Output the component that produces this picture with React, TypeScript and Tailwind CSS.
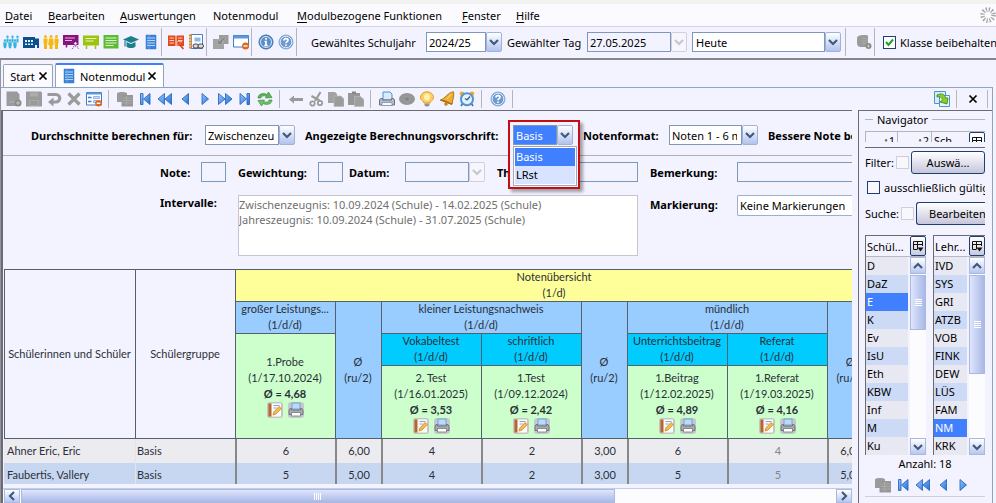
import React from 'react';

type IconProps = { children: React.ReactNode };

const Svg: React.FC<IconProps> = ({ children }) => (
  <svg viewBox="0 0 16 16" className="w-4 h-4 shrink-0" aria-hidden="true">{children}</svg>
);

const GREY = '#9b9b9b';

/* ---------- main toolbar icons ---------- */

const IconClass = () => (
  <Svg>
    <g fill="#35b4dd">
      <circle cx="4.500" cy="2.800" r="1.200" /><circle cx="9.500" cy="2.800" r="1.200" /><circle cx="14.500" cy="2.800" r="1.200" />
      <path d="M3.500 4.500h2v4h-2zM8.500 4.500h2v4h-2zM13.500 4.500h2v4h-2z" />
      <circle cx="2" cy="6.500" r="1.300" /><circle cx="7" cy="6.500" r="1.300" /><circle cx="12" cy="6.500" r="1.300" />
      <path d="M.3 8.300h3.400v3l-.7 3H1l-.7-3zM5.300 8.300h3.400v3l-.7 3H6l-.7-3zM10.300 8.300h3.400v3l-.7 3h-2l-.7-3z" />
    </g>
  </Svg>
);

const IconSchool = () => (
  <Svg>
    <path d="M0 3h12v1.500h4V14h-2v-3h-2v3H0z" fill="#0b4f8c" />
    <path d="M2 6h2v2H2zM5 6h2v2H5zM8 6h2v2H8zM2 9.500h2v1.500H2zM5 9.500h2v1.500H5zM8 9.500h2v1.500H8z" fill="#e8f1fa" />
  </Svg>
);

const IconTeachers = () => (
  <Svg>
    <g fill="#f8b70c">
      <circle cx="2.500" cy="2.500" r="1.500" /><circle cx="8" cy="2.500" r="1.500" /><circle cx="13.500" cy="2.500" r="1.500" />
      <path d="M.5 4.500h4v5H4V15H1V9.500H.5zM6 4.500h4l.8 6.500H9.500v4h-3v-4H5.200zM11.500 4.500h4v5H15V15h-3V9.500h-.5z" />
    </g>
  </Svg>
);

const IconBoardPurple = () => (
  <Svg>
    <path d="M0 1h15.500v10H0z" fill="#86147c" />
    <path d="M2 4h10M2 6.500h7" stroke="#e3b5df" />
    <path d="M3.500 11v2.500" stroke="#86147c" strokeWidth="1.500" />
    <circle cx="12.500" cy="9.500" r="1.800" fill="#f3f3ff" stroke="#86147c" />
    <path d="M9.500 15c0-3.500 6-3.500 6 0" fill="none" stroke="#b468ae" strokeDasharray="1 1" strokeWidth="1.500" />
  </Svg>
);

const IconBoardLime = () => (
  <Svg>
    <path d="M0 1.500h16v10H0z" fill="#9cc40a" />
    <path d="M2.500 4.500h11M2.500 7h8" stroke="#eef7c4" />
    <path d="M3.500 11.500V15M12.500 11.500V15" stroke="#9cc40a" strokeWidth="1.500" />
  </Svg>
);

const IconBoardGreen = () => (
  <Svg>
    <path d="M.5 1h15v13.500H.5z" fill="#5dbb32" />
    <path d="M2.500 4h11M2.500 6.500h11M2.500 9h11M2.500 11.500h8" stroke="#dff5d3" />
  </Svg>
);

const IconHat = () => (
  <Svg>
    <path d="M0 5.500 8 2l8 3.500L8 9z" fill="#1d7f8c" />
    <path d="M3.500 8v4.500c2 2 7 2 9 0V8L8 10z" fill="#1d7f8c" />
    <path d="M2 6.500v6" stroke="#1d7f8c" strokeWidth="1.200" />
  </Svg>
);

const IconNotebook = () => (
  <Svg>
    <path d="M3 1h10v14H3z" fill="#3c84d8" stroke="#2f74c4" strokeWidth=".5" />
    <path d="M4 4h8M4 6.500h8M4 9h8M4 11.500h8" stroke="#b7d6f7" strokeWidth="1.200" />
    <path d="M6 1v14" stroke="#79b0ea" strokeWidth=".7" />
  </Svg>
);

const IconBookRed = () => (
  <Svg>
    <path d="M0 1.500h7.500V12H0zM8.500 1.500H16V12H8.500z" fill="#e2461b" />
    <path d="M1.500 4h4.500M1.500 6.500h4.500M1.500 9h4.500M10 4h4.500M10 6.500h4.500" stroke="#fbd3c5" />
    <path d="M9 7.500v5l5-5z" fill="#e2461b" stroke="#fbd3c5" strokeWidth=".6" />
    <path d="m11 10 4.500 5" stroke="#e2461b" strokeWidth="1.800" />
  </Svg>
);

const IconReport = () => (
  <Svg>
    <path d="M3 .5h11.500v14H3z" fill="#fff" stroke="#4d7fc0" />
    <path d="M1 .5h3v14H1z" fill="#c98a45" />
    <path d="M0 3h3M0 6h3M0 9h3M0 12h3" stroke="#eee" />
    <path d="M6.500 3.500h6v4h-6z" fill="#8db8ec" />
    <rect x="5" y="10" width="5.500" height="4" rx="2" fill="#ddd" stroke="#444" />
    <rect x="10" y="10" width="5.500" height="4" rx="2" fill="#ddd" stroke="#444" />
  </Svg>
);

const IconTransfer = () => (
  <Svg>
    <path d="M6 1h9.500v9H6z" fill={GREY} />
    <path d="M0 5h11v10H0z" fill="#a3a3a3" />
    <path d="m13 4-4.500 4.500 2 2H4.500V5l2 2L11 3z" fill="#868686" stroke="#b8b8b8" strokeWidth=".6" />
  </Svg>
);

const IconWindowMinus = () => (
  <Svg>
    <path d="M.5 1.500h15V13H.5z" fill="#fff" stroke="#3f7cc9" />
    <path d="M.5 1.500h15v3H.5z" fill="#5e98dd" />
    <circle cx="12.500" cy="12" r="3.500" fill="#e2661b" />
    <path d="M10.500 12h4" stroke="#fff" strokeWidth="1.400" />
  </Svg>
);

const IconFormMinus = () => (
  <Svg>
    <path d="M.5 1.500h15V14H.5z" fill="#fff" stroke="#3f7cc9" />
    <path d="M.5 1.500h15v2H.5z" fill="#5e98dd" />
    <path d="M2 6.500h3.500M2 10.500h3.500" stroke="#3f7cc9" strokeWidth="1.500" />
    <path d="M7.500 5.500h6v2h-6zM7.500 9.500h3v2h-3z" fill="#cfe0f6" stroke="#6da0dd" strokeWidth=".7" />
    <circle cx="12.500" cy="12.300" r="3.300" fill="#e2661b" />
    <path d="M10.700 12.300h3.600" stroke="#fff" strokeWidth="1.400" />
  </Svg>
);

const IconInfo = () => (
  <Svg>
    <circle cx="8" cy="8" r="7" fill="#5b8fc9" stroke="#3a6fae" />
    <circle cx="8" cy="8" r="5.500" fill="none" stroke="#d5e4f4" />
    <path d="M8 4v1.800M6.500 7.500H8v4M6.300 11.500h3.400" stroke="#fff" strokeWidth="1.700" fill="none" />
  </Svg>
);

const IconHelp = () => (
  <Svg>
    <circle cx="8" cy="8" r="7" fill="#6d9bd1" stroke="#84a9d6" />
    <circle cx="8" cy="8" r="5.800" fill="none" stroke="#e2ecf8" />
    <path d="M6 6.500C6 4 10 4 10 6.300 10 7.700 8 7.500 8 9.300M8 10.500v1.600" stroke="#fff" strokeWidth="1.700" fill="none" />
  </Svg>
);

const IconDbAdd = () => (
  <Svg>
    <path d="M1 3.500C2.500 1 6 .5 12 1.500V13H4.500C2 13 1 11 1 9z" fill={GREY} />
    <path d="M6 4.500h5M6 7h5M6 9.500h5" stroke="#a8a8a8" />
    <circle cx="12.500" cy="12" r="3" fill="#8b8b8b" />
    <path d="M11 12h3M12.500 10.500v3" stroke="#c4c4c4" />
  </Svg>
);

/* ---------- module toolbar icons ---------- */

const IconNew = () => (
  <Svg>
    <path d="M.5.500H11l2.500 3V15H.5z" fill={GREY} />
    <path d="M3 11h6" stroke="#b4b4b4" />
    <circle cx="12" cy="12" r="3.500" fill="#8c8c8c" />
    <path d="M10 12h4M12 10v4" stroke="#c4c4c4" />
  </Svg>
);

const IconSave = () => (
  <Svg>
    <path d="M0 .500h15l1 1V15.500H0z" fill={GREY} />
    <path d="M4 1.500h8v4H4z" fill="#adadad" />
    <path d="M3 9h10v6H3z" fill="#a8a8a8" />
    <path d="M4.500 11h7M4.500 13h7" stroke="#8b8b8b" />
  </Svg>
);

const IconUndo = () => (
  <Svg>
    <path d="M1.500 3.500H10a3.500 3.500 0 0 1 0 7.500H6" fill="none" stroke={GREY} strokeWidth="3.200" />
    <path d="M7.500 6.500v9L2 11z" fill={GREY} />
  </Svg>
);

const IconDelete = () => (
  <Svg><path d="m2.500 2.500 11 11M13.500 2.500l-11 11" stroke={GREY} strokeWidth="3.200" /></Svg>
);

const IconCardTable = () => (
  <Svg>
    <path d="M0 2c2-1.500 8-1.500 10 0v9H0z" fill={GREY} />
    <path d="M4.500 4H16v11.500H4.500z" fill="#979797" />
    <path d="M5.500 7h10M5.500 9.500h10M5.500 12h10M9.500 5v9.500" stroke="#b0b0b0" strokeWidth=".7" />
  </Svg>
);

const NavSvg: React.FC<{ d: string }> = ({ d }) => (
  <Svg>
    <defs>
      <linearGradient id="nav" x1="0" y1="0" x2="1" y2="1">
        <stop offset="0" stopColor="#9cc8f8" />
        <stop offset="1" stopColor="#1f6fd8" />
      </linearGradient>
    </defs>
    <path d={d} fill="url(#nav)" stroke="#2b68c4" strokeWidth=".9" />
  </Svg>
);

const IconFirst = () => <NavSvg d="M3.500 2.500h2.500v11H3.500zM13 2.500v11L6.500 8z" />;
const IconRewind = () => <NavSvg d="M7.500 2.500v11L1 8zM14.500 2.500v11L8 8z" />;
const IconPrev = () => <NavSvg d="M11.500 2.500v11L5 8z" />;
const IconNext = () => <NavSvg d="M5 2.500v11L11.500 8z" />;
const IconForward = () => <NavSvg d="M1.500 2.500v11L8 8zM8.500 2.500v11L15 8z" />;
const IconLast = () => <NavSvg d="M3 2.500v11L9.500 8zM10 2.500h2.500v11H10z" />;

const IconRefresh = () => (
  <Svg>
    <path d="M1 7c0-4 5-5.500 9-3.500L11.500 1 15 6.500 8.500 7l1-1.700C6.500 4.200 4 5 4 7z" fill="#5fb35b" stroke="#3b8f3e" strokeWidth=".7" />
    <path d="M15 9c0 4-5 5.500-9 3.500L4.500 15 1 9.500 7.500 9l-1 1.700c3 1.100 5.500.3 5.500-1.700z" fill="#6fc068" stroke="#3b8f3e" strokeWidth=".7" />
  </Svg>
);

const IconArrowLeft = () => (
  <Svg><path d="M1 8.500 6 4.500v2.500h9v3H6v2.500z" fill={GREY} /></Svg>
);

const IconCut = () => (
  <Svg>
    <path d="M12.500 1 7 10M3.500 5l8 4.500" stroke={GREY} strokeWidth="2.200" />
    <circle cx="4.500" cy="12.500" r="2.200" fill="none" stroke={GREY} strokeWidth="1.800" />
    <circle cx="12" cy="12" r="2.200" fill="none" stroke={GREY} strokeWidth="1.800" />
  </Svg>
);

const IconCopy = () => (
  <Svg>
    <path d="M0 1h7l2 2v9H0z" fill="#a2a2a2" />
    <path d="M6 5h7l3 3v7.500H6z" fill={GREY} stroke="#bcbcbc" strokeWidth=".7" />
  </Svg>
);

const IconPaste = () => (
  <Svg>
    <path d="M0 2h12v12H0z" fill="#979797" />
    <path d="M4 .500h4V3H4z" fill="#888" />
    <path d="M6.500 5.500h6L16 8.500v7H6.500z" fill="#9f9f9f" stroke="#bcbcbc" strokeWidth=".7" />
  </Svg>
);

const IconPrint = () => (
  <Svg>
    <path d="M4 1h7l2 2v6H4z" fill="#d9eafc" stroke="#4e90d8" />
    <path d="M1.500 7.500h2V9h9V7.500h2L15.500 9v5H.5V9z" fill="#b8bcc2" stroke="#6e7379" />
    <path d="M3 11.500h10v3H3z" fill="#f6f9fd" stroke="#7790ad" strokeWidth=".8" />
  </Svg>
);

const IconEye = () => (
  <Svg>
    <ellipse cx="8" cy="8" rx="8" ry="6" fill="#969696" />
    <circle cx="8" cy="8" r="2.500" fill="#868686" stroke="#a6a6a6" strokeWidth=".7" />
  </Svg>
);

const IconBulb = () => (
  <Svg>
    <path d="M8 .8c4 0 6.500 2.700 6.500 5.700 0 2.500-3 3.500-3.500 5.500H5c-.5-2-3.500-3-3.500-5.500C1.500 3.500 4 .8 8 .8z" fill="#fcd05a" stroke="#e69a2c" />
    <ellipse cx="8" cy="6" rx="3" ry="3.500" fill="#fff0b4" />
    <path d="M5.500 12.500h5v2l-1.500 1H7l-1.500-1z" fill="#8d9299" />
  </Svg>
);

const IconBell = () => (
  <Svg>
    <path d="M14.500.800c1 4-1 8-1.500 12.500L1.500 9C6 7.500 9 1.500 14.500.800z" fill="#edae34" stroke="#b87416" />
    <path d="M1.500 9c3 .5 9 3 11.500 4.300" stroke="#a76b16" strokeWidth="1.300" fill="none" />
    <circle cx="7" cy="13" r="1.800" fill="#c37f1a" />
    <path d="M12.500 3c-2 1.500-3 3.500-4.500 5" stroke="#fbe09a" fill="none" />
  </Svg>
);

const IconAlarm = () => (
  <Svg>
    <circle cx="3" cy="2.800" r="2.300" fill="#f0a43a" /><circle cx="13" cy="2.800" r="2.300" fill="#f0a43a" />
    <path d="m4 12-2 3M12 12l2 3" stroke="#3876bd" strokeWidth="1.700" />
    <circle cx="8" cy="8.300" r="6" fill="#e6f2fc" stroke="#5093d8" strokeWidth="2" />
    <path d="M8 9 11 5.500M8 9 6 7.500" stroke="#35597e" strokeWidth="1.200" />
  </Svg>
);

const IconDetach = () => (
  <Svg>
    <path d="M.5.500h11v12H.5z" fill="#d7ebfb" stroke="#4c94cf" />
    <path d="M5.500 4.500h10v11h-10z" fill="#eaf5fd" stroke="#4c94cf" />
    <path d="M3 4c4-2 8-1 8.500 3H14l-1 6-7-2 2-1.500C9 7 7 5.500 3 6z" fill="#8ccc2b" stroke="#3d8d22" strokeWidth=".9" />
  </Svg>
);

const IconEdit = () => (
  <Svg>
    <rect width="16" height="16" rx="3" fill="#c9c4c0" />
    <path d="M3 1.500h11v13H3z" fill="#fcfcfc" />
    <path d="M1.500 1.500h3v13h-3z" fill="#b5652f" />
    <path d="M6.500 3.500h6M6.500 6h3" stroke="#7da4d4" />
    <path d="m6 13 .8-3L12 4.500l2.300 2L9 12z" fill="#f5bd4c" stroke="#c98728" strokeWidth=".8" />
  </Svg>
);

const IconPrinterTile = () => (
  <Svg>
    <rect width="16" height="16" rx="3" fill="#c5c8cc" />
    <path d="M4 1h8v6H4z" fill="#b9dbf8" stroke="#6797c5" strokeWidth=".8" />
    <path d="M2 6.500h1.500V8h9V6.500H14l1 2v4H1v-4z" fill="#a9adb3" stroke="#5f656b" strokeWidth=".8" />
    <path d="M3.500 10.500h9V14h-9z" fill="#fff" stroke="#777" strokeWidth=".8" />
  </Svg>
);

const IconColumns = () => (
  <svg viewBox="0 0 12 12" className="w-3 h-3 shrink-0" aria-hidden="true">
    <path d="M5 9.500H1.500v-8h9V6M1.500 4.500h9M5.500 1.500v8" fill="none" stroke="#111" />
    <path d="M5.500 7.500h6l-3 4z" fill="#111" />
  </svg>
);

const Spinner = () => (
  <svg viewBox="0 0 16 16" className="w-4 h-4 shrink-0" aria-hidden="true">
    <circle cx="8" cy="8" r="5.500" fill="none" stroke="#a6a6a6" strokeWidth="4.500" strokeDasharray="1.300 1.580" />
  </svg>
);

const CloseX = () => (
  <svg viewBox="0 0 10 10" className="h-[10px] w-[10px] shrink-0" aria-hidden="true">
    <path d="M1.500 1.500l7 7M8.500 1.500l-7 7" stroke="#000" strokeWidth="1.700" />
  </svg>
);

/* ---------- shared controls ---------- */

const Chevron: React.FC<{ d: string; color?: string }> = ({ d, color = '#3f5a80' }) => (
  <svg viewBox="0 0 10 10" className="w-[10px] h-[10px]" aria-hidden="true">
    <path d={d} fill="none" stroke={color} strokeWidth="2.200" />
  </svg>
);

const DOWN = 'M1 3l4 4 4-4';
const UP = 'M1 7l4-4 4 4';
const LEFT = 'M7 1L3 5l4 4';
const RIGHT = 'M3 1l4 4-4 4';

const Arrow: React.FC<{ off?: boolean }> = ({ off }) => (
  <span
    className={`pointer-events-none flex h-full w-4 shrink-0 items-center justify-center rounded-[2px] border ${
      off ? 'border-[#cfcfdf] bg-[#f6f6fc]' : 'border-[#9fb2da] bg-gradient-to-b from-white to-[#b3c2ec]'
    }`}
  >
    <Chevron d={DOWN} color={off ? '#c6c6cc' : '#3f5a80'} />
  </span>
);

const Combo: React.FC<{ id: string; value: string; width: string; active?: boolean }> = ({ id, value, width, active }) => (
  <div className="flex h-5 shrink-0">
    <select
      id={id}
      defaultValue={value}
      className={`h-full appearance-none overflow-hidden border border-[#7d98bd] pl-[2px] pr-1 outline-none ${width} ${
        active ? 'bg-[#4080ff] text-white' : 'bg-white'
      }`}
    >
      <option>{value}</option>
    </select>
    <Arrow />
  </div>
);

const Tool: React.FC<{ label: string; children: React.ReactNode }> = ({ label, children }) => (
  <button type="button" aria-label={label} className="flex h-5 w-5 shrink-0 items-center justify-center">{children}</button>
);

const Sep = () => <span className="mx-1 w-px shrink-0 self-stretch bg-[#b4b4ba]" />;
const GroupSep = () => <span className="mr-1 w-px shrink-0 self-stretch bg-[#b4b4ba]" />;

/* ---------- sections ---------- */

const menu = [
  ['D', 'atei', 'w-[43px]'],
  ['B', 'earbeiten', 'w-[72px]'],
  ['A', 'uswertungen', 'w-[93px]'],
  ['', 'Notenmodul', 'w-[84px]'],
  ['M', 'odulbezogene Funktionen', 'w-[165px]'],
  ['F', 'enster', 'w-[54px]'],
  ['H', 'ilfe', ''],
];

const MenuBar = () => (
  <nav className="flex h-[27px] shrink-0 items-center border-t-4 border-b border-t-[#f2f2f0] border-b-[#d3d3e6] bg-[#fafaff] pl-[5px]">
    {menu.map(([key, rest, width]) => (
      <a key={rest} href="#" className={`shrink-0 whitespace-nowrap ${width}`}>
        {key && <span className="underline underline-offset-2">{key}</span>}
        {rest}
      </a>
    ))}
    <span className="ml-auto"><Spinner /></span>
  </nav>
);

const MainToolbar = () => (
  <div className="flex h-[33px] shrink-0 items-center overflow-hidden whitespace-nowrap border-b-2 border-[#85858c] bg-[#f3f3ff] pt-px pb-[2px] pl-px">
    <Tool label="Klassen"><IconClass /></Tool>
    <Tool label="Schule"><IconSchool /></Tool>
    <Tool label="Lehrkräfte"><IconTeachers /></Tool>
    <Tool label="Unterricht"><IconBoardPurple /></Tool>
    <Tool label="Vertretung"><IconBoardLime /></Tool>
    <Tool label="Fächer"><IconBoardGreen /></Tool>
    <Tool label="Abschlüsse"><IconHat /></Tool>
    <Tool label="Noten"><IconNotebook /></Tool>
    <GroupSep />
    <Tool label="Lesezeichen"><IconBookRed /></Tool>
    <Tool label="Berichte"><IconReport /></Tool>
    <GroupSep />
    <Tool label="Übertragen"><IconTransfer /></Tool>
    <Tool label="Fenster schließen"><IconWindowMinus /></Tool>
    <GroupSep />
    <Tool label="Info"><IconInfo /></Tool>
    <Tool label="Hilfe"><IconHelp /></Tool>
    <GroupSep />
    <label htmlFor="year" className="ml-[10px] w-[115px] shrink-0">Gewähltes Schuljahr</label>
    <Combo id="year" value="2024/25" width="w-[60px]" />
    <label htmlFor="day" className="ml-[5px] w-20 shrink-0">Gewählter Tag</label>
    <div className="flex h-5 shrink-0">
      <input id="day" defaultValue="27.05.2025" className="h-full w-[84px] border border-[#7d98bd] bg-[#f3f3ff] pl-[2px]" />
      <Arrow off />
    </div>
    <select aria-label="Zeitraum" className="ml-[5px] h-5 w-[133px] shrink-0 appearance-none border border-[#7d98bd] bg-white pl-[3px]">
      <option>Heute</option>
    </select>
    <span className="h-5 shrink-0"><Arrow /></span>
    <span className="mr-2 ml-1 w-px shrink-0 self-stretch bg-[#b4b4ba]" />
    <Tool label="Datensatz hinzufügen"><IconDbAdd /></Tool>
    <span className="mr-2 w-px shrink-0 self-stretch bg-[#b4b4ba]" />
    <label className="flex shrink-0 items-center gap-1">
      <span className="grid">
        <input type="checkbox" defaultChecked className="peer h-[13px] w-[13px] appearance-none border border-[#1d3f74] bg-white [grid-area:1/1]" />
        <svg viewBox="0 0 13 13" className="invisible h-[13px] w-[13px] peer-checked:visible [grid-area:1/1]" aria-hidden="true">
          <path d="M3 6l2.500 3L10 3.500" fill="none" stroke="#21a121" strokeWidth="2" />
        </svg>
      </span>
      Klasse beibehalten
    </label>
  </div>
);

const Tabs = () => (
  <div className="flex h-7 shrink-0 items-end gap-[2px] border-b border-[#93a3bd] pl-[2px]">
    <button type="button" className="flex h-[23px] w-[50px] items-center justify-center gap-[3px] rounded-t-[2px] border border-b-0 border-[#93a3bd] bg-[#fafaff] pl-[2px]">
      Start
      <CloseX />
    </button>
    <button type="button" className="flex h-6 w-[109px] items-center gap-[2px] rounded-t-[2px] border border-t-2 border-b-0 border-[#93a3bd] border-t-[#4080ff] bg-white pl-[5px]">
      <IconNotebook />
      <span className="ml-px">Notenmodul</span>
      <CloseX />
    </button>
  </div>
);

const ModuleToolbar = () => (
  <div className="flex h-[22px] shrink-0 items-center bg-[#f3f3ff] py-[2px] pl-[3px]">
    <Tool label="Neu"><IconNew /></Tool>
    <Tool label="Speichern"><IconSave /></Tool>
    <Tool label="Rückgängig"><IconUndo /></Tool>
    <Tool label="Löschen"><IconDelete /></Tool>
    <Tool label="Formular schließen"><IconFormMinus /></Tool>
    <Sep />
    <span className="w-[2px]" />
    <Tool label="Auswahl"><IconCardTable /></Tool>
    <Tool label="Erster"><IconFirst /></Tool>
    <Tool label="Schnell zurück"><IconRewind /></Tool>
    <Tool label="Zurück"><IconPrev /></Tool>
    <Tool label="Weiter"><IconNext /></Tool>
    <Tool label="Schnell weiter"><IconForward /></Tool>
    <Tool label="Letzter"><IconLast /></Tool>
    <Tool label="Aktualisieren"><IconRefresh /></Tool>
    <Sep />
    <span className="w-[2px]" />
    <Tool label="Links"><IconArrowLeft /></Tool>
    <Tool label="Ausschneiden"><IconCut /></Tool>
    <Tool label="Kopieren"><IconCopy /></Tool>
    <Tool label="Einfügen"><IconPaste /></Tool>
    <Sep />
    <span className="w-[2px]" />
    <Tool label="Drucken"><IconPrint /></Tool>
    <Tool label="Ansicht"><IconEye /></Tool>
    <Tool label="Tipp"><IconBulb /></Tool>
    <Tool label="Erinnerung"><IconBell /></Tool>
    <Tool label="Wecker"><IconAlarm /></Tool>
    <Sep />
    <span className="w-[2px]" />
    <Tool label="Hilfe"><IconHelp /></Tool>
    <Sep />
    <span className="ml-auto" />
    <Tool label="Abdocken"><IconDetach /></Tool>
    <Sep />
    <span className="w-[2px]" />
    <Tool label="Schließen"><CloseX /></Tool>
    <Sep />
  </div>
);

const FilterRow = () => (
  <div className="flex h-[45px] shrink-0 items-center gap-[10px] whitespace-nowrap border-b border-[#b0b0b8] pb-px pt-[5px] pl-7">
    <label htmlFor="avg" className="w-[164px] shrink-0 font-bold">Durchschnitte berechnen für:</label>
    <Combo id="avg" value="Zwischenzeugnis" width="w-[74px]" />
    <label htmlFor="rule" className="w-[198px] shrink-0 font-bold">Angezeigte Berechnungsvorschrift:</label>
    <div className="relative z-10">
      <div className="absolute -left-[5px] -top-[5px] h-[69px] w-[72px] border-2 border-[#c60d12] bg-[#f3f3ff] shadow-[3px_3px_3px_rgba(0,0,0,0.35)]" />
      <div className="relative"><Combo id="rule" value="Basis" width="w-[44px]" active /></div>
      <ul role="listbox" aria-label="Berechnungsvorschrift" className="absolute left-0 top-[21px] w-16 border border-[#a6a6b6] bg-white p-px">
        <li role="option" aria-selected="true" className="h-[18px] bg-[#4080ff] pl-px leading-[18px] text-white">Basis</li>
        <li role="option" aria-selected="false" className="h-[18px] bg-[#d8e4ff] pl-px leading-[18px]">LRst</li>
      </ul>
    </div>
    <label htmlFor="format" className="w-[76px] shrink-0 font-bold">Notenformat:</label>
    <Combo id="format" value="Noten 1 - 6 mit Tendenz" width="w-[73px]" />
    <span className="shrink-0 font-bold">Bessere Note bei Grenzfall</span>
  </div>
);

const field = 'h-5 shrink-0 border border-[#7d98bd] bg-[#f3f3ff]';

const DetailForm = () => (
  <div className="flex shrink-0 flex-col gap-[13px] whitespace-nowrap pt-[6px] pl-[157px]">
    <div className="flex items-center">
      <label htmlFor="grade" className="w-[41px] shrink-0 font-bold">Note:</label>
      <input id="grade" className={`${field} w-[25px]`} />
      <label htmlFor="weight" className="ml-3 w-20 shrink-0 font-bold">Gewichtung:</label>
      <input id="weight" className={`${field} w-[25px]`} />
      <label htmlFor="date" className="ml-[6px] w-14 shrink-0 font-bold">Datum:</label>
      <input id="date" className={`${field} w-16`} />
      <span className="h-5 shrink-0"><Arrow off /></span>
      <label htmlFor="topic" className="ml-3 w-14 shrink-0 font-bold">Thema:</label>
      <input id="topic" className={`${field} w-[85px]`} />
      <label htmlFor="remark" className="ml-3 w-[87px] shrink-0 font-bold">Bemerkung:</label>
      <input id="remark" className="h-5 min-w-0 flex-1 border border-r-0 border-[#7d98bd] bg-[#f3f3ff]" />
    </div>
    <div className="flex items-start">
      <label htmlFor="intervals" className="w-[78px] shrink-0 font-bold">Intervalle:</label>
      <textarea
        id="intervals"
        rows={4}
        className="h-[61px] w-[400px] shrink-0 resize-none border border-[#c6c6d2] bg-white pt-px leading-[15px] text-[#6f6f6f]"
        defaultValue={'Zwischenzeugnis: 10.09.2024 (Schule) - 14.02.2025 (Schule)\nJahreszeugnis: 10.09.2024 (Schule) - 31.07.2025 (Schule)'}
      />
      <label htmlFor="marks" className="ml-3 w-[87px] shrink-0 pt-[2px] font-bold">Markierung:</label>
      <select id="marks" className="h-[21px] min-w-0 flex-1 appearance-none rounded-l-[2px] border border-r-0 border-[#9ab0cc] bg-white pl-[2px]">
        <option>Keine Markierungen</option>
      </select>
    </div>
  </div>
);

// inset shadows keep the grid lines out of the cell heights
const th = 'overflow-hidden p-0 font-normal shadow-[inset_1px_1px_0_#55606c]';
const thTall = 'overflow-hidden border-b border-[#55606c] p-0 font-normal shadow-[inset_1px_1px_0_#55606c]';

const Test: React.FC<{ name: string; date: string; avg: string }> = ({ name, date, avg }) => (
  <>
    {name}<br />
    (1/{date})<br />
    <b>Ø = {avg}</b>
    <span className="flex h-4 items-center justify-center gap-[5px]">
      <button type="button" aria-label={`${name} bearbeiten`}><IconEdit /></button>
      <button type="button" aria-label={`${name} drucken`}><IconPrinterTile /></button>
    </span>
  </>
);

const students = [
  { name: 'Ahner Eric, Eric', group: 'Basis', marks: ['6', '6,00', '4', '2', '3,00', '6', '4', '6,00'], bg: 'bg-[#ebebf0]' },
  { name: 'Faubertis, Vallery', group: 'Basis', marks: ['5', '5,00', '4', '2', '3,00', '5', '5', '5,00'], bg: 'bg-[#c7d7f2]' },
];

const GradeTable = () => (
  <div className="mt-[13px] h-[215px] shrink-0 overflow-hidden pl-px">
    <table className="w-[869px] table-fixed border-separate border-spacing-0 font-[Lato,'Noto_Sans',sans-serif] leading-4 text-[#2b2f38]">
      <colgroup>
        <col className="w-[131px]" />
        <col className="w-[100px]" />
        <col className="w-[100px]" />
        <col className="w-[46px]" />
        <col className="w-[100px]" />
        <col className="w-[100px]" />
        <col className="w-[46px]" />
        <col className="w-[100px]" />
        <col className="w-[100px]" />
        <col className="w-[46px]" />
      </colgroup>
      <thead>
        <tr className="h-8">
          <th rowSpan={4} className={thTall}>Schülerinnen und Schüler</th>
          <th rowSpan={4} className={thTall}>Schülergruppe</th>
          <th colSpan={8} className={`${th} bg-[#ffff99]`}>Notenübersicht<br />(1/d)</th>
        </tr>
        <tr className="h-8">
          <th className={`${th} bg-[#99ccff]`}>großer Leistungs...<br />(1/d/d)</th>
          <th rowSpan={3} className={`${thTall} bg-[#99ccff]`}>Ø<br />(ru/2)</th>
          <th colSpan={2} className={`${th} bg-[#99ccff]`}>kleiner Leistungsnachweis<br />(1/d/d)</th>
          <th rowSpan={3} className={`${thTall} bg-[#99ccff]`}>Ø<br />(ru/2)</th>
          <th colSpan={2} className={`${th} bg-[#99ccff]`}>mündlich<br />(1/d/d)</th>
          <th rowSpan={3} className={`${thTall} bg-[#99ccff]`}>Ø<br />(ru/2)</th>
        </tr>
        <tr className="h-8">
          <th rowSpan={2} className={`${thTall} bg-[#ccffcc]`}><Test name="1.Probe" date="17.10.2024" avg="4,68" /></th>
          <th className={`${th} bg-[#00ccff]`}>Vokabeltest<br />(1/d/d)</th>
          <th className={`${th} bg-[#00ccff]`}>schriftlich<br />(1/d/d)</th>
          <th className={`${th} bg-[#00ccff]`}>Unterrichtsbeitrag<br />(1/d/d)</th>
          <th className={`${th} bg-[#00ccff]`}>Referat<br />(1/d/d)</th>
        </tr>
        <tr className="h-[74px]">
          <th className={`${thTall} bg-[#ccffcc]`}><Test name="2. Test" date="16.01.2025" avg="3,53" /></th>
          <th className={`${thTall} bg-[#ccffcc]`}><Test name="1.Test" date="09.12.2024" avg="2,42" /></th>
          <th className={`${thTall} bg-[#ccffcc]`}><Test name="1.Beitrag" date="12.02.2025" avg="4,89" /></th>
          <th className={`${thTall} bg-[#ccffcc]`}><Test name="1.Referat" date="19.03.2025" avg="4,16" /></th>
        </tr>
      </thead>
      <tbody>
        {students.map((s) => (
          <tr key={s.name} className={`h-6 ${s.bg}`}>
            <td className="p-0 pl-[3px]">{s.name}</td>
            <td className="border-l border-[#dfe4ee] p-0 pl-px">{s.group}</td>
            {s.marks.map((m, i) => (
              <td key={i} className={`border-l-2 border-[#888] p-0 text-center ${i === 6 ? 'text-[#858585]' : ''}`}>{m}</td>
            ))}
          </tr>
        ))}
      </tbody>
    </table>
  </div>
);

const scrollBtn = 'flex shrink-0 items-center justify-center border border-[#a9b9e2] bg-gradient-to-b from-white to-[#b9c7ee]';

const HorizontalScroll = () => (
  <div className="mt-1 flex h-[15px] shrink-0 border-t border-[#c3cdea] bg-[#fcfcff] pl-px">
    <button type="button" aria-label="Nach links" className={`${scrollBtn} w-4`}><Chevron d={LEFT} /></button>
    <span className="ml-px flex w-[70%] items-center justify-center gap-px border border-[#a9b9e2] bg-gradient-to-b from-[#dfe6fc] to-[#a9b8e6]">
      <i className="h-[7px] w-px bg-white" /><i className="h-[7px] w-px bg-white" /><i className="h-[7px] w-px bg-white" /><i className="h-[7px] w-px bg-white" />
    </span>
    <button type="button" aria-label="Nach rechts" className={`${scrollBtn} ml-auto w-4`}><Chevron d={RIGHT} /></button>
  </div>
);

const subjects = ['D', 'DaZ', 'E', 'K', 'Ev', 'IsU', 'Eth', 'KBW', 'Inf', 'M', 'Ku'];
const teachers = ['IVD', 'SYS', 'GRI', 'ATZB', 'VOB', 'FINK', 'DEW', 'LÜS', 'FAM', 'NM', 'KRK'];

type NavListProps = { title: string; items: string[]; selected: string; thumb: string; width: string };

const NavList: React.FC<NavListProps> = ({ title, items, selected, thumb, width }) => (
  <div className={`flex min-w-0 flex-col border-l border-t border-[#6b6b75] ${width}`}>
    <div className="flex h-[21px] items-center justify-between border-b border-[#b8b8c4]">
      <span className="pl-px">{title}</span>
      <button type="button" aria-label={`Spalten ${title}`} className="flex h-5 w-4 shrink-0 items-center justify-center rounded-[2px] border border-[#1d3f74] bg-gradient-to-b from-white to-[#c9c9dc]">
        <IconColumns />
      </button>
    </div>
    <div className="flex">
      <ul className="min-w-0 flex-1">
        {items.map((item, i) => (
          <li
            key={item}
            className={`h-[18px] pl-px leading-[18px] ${
              item === selected ? 'bg-[#4080ff] text-white' : i % 2 ? 'bg-[#cddaf6]' : 'bg-[#e8e8f3]'
            }`}
          >
            {item}
          </li>
        ))}
      </ul>
      <div className="ml-[2px] flex w-4 flex-col bg-[#fcfcff]">
        <button type="button" aria-label="Nach oben" className={`${scrollBtn} h-[17px]`}><Chevron d={UP} /></button>
        <span className={`mt-px flex flex-col items-center justify-center gap-px border border-[#a9b9e2] bg-gradient-to-r from-[#dfe6fc] to-[#a9b8e6] ${thumb}`}>
          <i className="h-px w-[7px] bg-white" /><i className="h-px w-[7px] bg-white" /><i className="h-px w-[7px] bg-white" /><i className="h-px w-[7px] bg-white" />
        </span>
        <button type="button" aria-label="Nach unten" className={`${scrollBtn} mt-auto h-[17px]`}><Chevron d={DOWN} /></button>
      </div>
    </div>
  </div>
);

const navButton = 'shrink-0 rounded-[3px] border border-[#1d3f74] bg-gradient-to-b from-white to-[#c6c6dc]';

const Navigator = () => (
  <aside className="flex w-[134px] shrink-0 flex-col overflow-hidden whitespace-nowrap border-l border-t border-[#6b6b75] pl-[6px] pr-[7px]">
    <h2 className="mb-[3px] flex h-[17px] shrink-0 items-center gap-1 before:h-px before:w-2 before:bg-[#b4b4bc] after:h-px after:flex-1 after:bg-[#b4b4bc]">Navigator</h2>
    <div className="flex h-[11px] shrink-0 overflow-hidden border-l border-t border-[#b4b4bc]">
      <span className="w-8 border-r border-[#b4b4bc] pr-[2px] text-right leading-[18px]">↑1</span>
      <span className="w-[34px] border-r border-[#b4b4bc] pr-[2px] text-right leading-[18px]">↑2</span>
      <span className="flex-1 pl-[2px] leading-[18px]">Sch...</span>
      <button type="button" aria-label="Spalten" className="flex h-5 w-4 shrink-0 items-center justify-center rounded-[2px] border border-[#1d3f74] bg-white"><IconColumns /></button>
    </div>
    <div className="mt-[5px] flex h-[30px] shrink-0 items-center border-t border-[#6b6b75]">
      <label htmlFor="filter" className="w-[31px] shrink-0">Filter:</label>
      <input id="filter" className="h-[13px] w-[13px] shrink-0 border border-[#cfcfd8] bg-[#f8f8fc]" />
      <button type="button" className={`${navButton} ml-[2px] h-[23px] flex-1`}>Auswä...</button>
    </div>
    <label className="flex h-5 shrink-0 items-center gap-1 overflow-hidden pl-[2px]">
      <input type="checkbox" className="h-[13px] w-[13px] shrink-0 appearance-none border border-[#1d3f74] bg-[#f8f8fc]" />
      ausschließlich gültige
    </label>
    <div className="flex h-8 shrink-0 items-center overflow-hidden">
      <label htmlFor="search" className="w-9 shrink-0">Suche:</label>
      <input id="search" className="h-[13px] w-[13px] shrink-0 border border-[#cfcfd8] bg-[#f8f8fc]" />
      <button type="button" className={`${navButton} ml-[2px] h-[23px] w-[70px] rounded-r-none border-r-0 pl-3 text-left`}>Bearbeiten</button>
    </div>
    <div className="mt-[6px] flex shrink-0 gap-[7px]">
      <NavList title="Schül..." items={subjects} selected="E" thumb="h-[55px]" width="w-[61px]" />
      <NavList title="Lehr..." items={teachers} selected="NM" thumb="h-[99px]" width="flex-1" />
    </div>
    <p className="h-[18px] shrink-0 text-center leading-[18px]">Anzahl: 18</p>
    <div className="flex h-6 shrink-0 items-center border-b border-[#cfcfdc] pl-2">
      <Tool label="Auswahl"><IconCardTable /></Tool>
      <Tool label="Erster"><IconFirst /></Tool>
      <Tool label="Schnell zurück"><IconRewind /></Tool>
      <Tool label="Zurück"><IconPrev /></Tool>
      <Tool label="Weiter"><IconNext /></Tool>
    </div>
  </aside>
);

const App: React.FC = () => (
  <div className="flex h-screen flex-col overflow-hidden bg-[#f3f3ff] font-['Noto_Sans','Open_Sans',sans-serif] text-[11px] leading-[15px] text-black">
    <MenuBar />
    <MainToolbar />
    <div className="flex min-h-0 flex-1 flex-col border-l border-[#93939c] pr-[3px]">
      <Tabs />
      <div className="flex min-h-0 flex-1 flex-col border-r border-[#93a3bd]">
        <ModuleToolbar />
        <div className="flex min-h-0 flex-1 gap-[6px]">
          <main className="flex min-w-0 flex-1 flex-col overflow-hidden border-l-2 border-t border-[#6b6b75]">
            <FilterRow />
            <DetailForm />
            <GradeTable />
            <HorizontalScroll />
          </main>
          <Navigator />
        </div>
      </div>
    </div>
  </div>
);

export default App;
